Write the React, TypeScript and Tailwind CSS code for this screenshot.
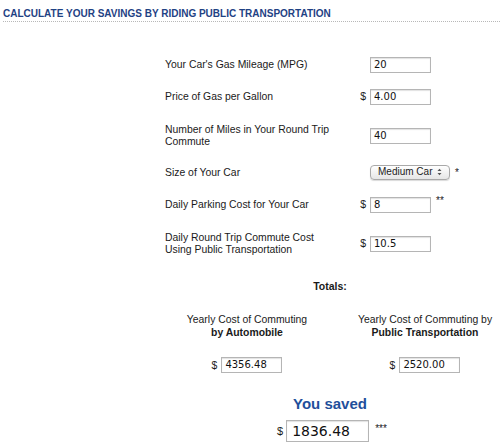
import React from 'react';

const labelFont = { fontFamily: '"Liberation Sans", Arial, sans-serif' };

function Field({ value, className = '' }: { value: string; className?: string }) {
  return (
    <div
      className={`flex items-center border border-[#b5b5b5] bg-white pl-[3px] text-[10px] leading-none text-[#111] shadow-[inset_0_1px_1px_rgba(0,0,0,0.12)] ${className}`}
      style={{ fontFamily: '"DejaVu Sans", Verdana, sans-serif' }}
    >
      {value}
    </div>
  );
}

type Row = {
  label: string[];
  dollar?: boolean;
  value?: string;
  select?: boolean;
  note?: string;
  height: string;
};

const rows: Row[] = [
  { label: ["Your Car's Gas Mileage (MPG)"], value: '20', height: 'h-[32px]' },
  { label: ['Price of Gas per Gallon'], dollar: true, value: '4.00', height: 'h-[32px]' },
  { label: ['Number of Miles in Your Round Trip', 'Commute'], value: '40', height: 'h-[46px]' },
  { label: ['Size of Your Car'], select: true, note: '*', height: 'h-[28px]' },
  { label: ['Daily Parking Cost for Your Car'], dollar: true, value: '8', note: '**', height: 'h-[36px]' },
  {
    label: ['Daily Round Trip Commute Cost', 'Using Public Transportation'],
    dollar: true,
    value: '10.5',
    height: 'h-[42px]',
  },
];

export default function App() {
  return (
    <div className="h-[444px] w-[500px] bg-white text-[#1a1a1a]" style={labelFont}>
      <div className="pl-[3px] pt-[7px]">
        <h1 className="text-[10px] font-bold leading-[13px] text-[#1f4284]">
          CALCULATE YOUR SAVINGS BY RIDING PUBLIC TRANSPORTATION
        </h1>
        <div className="mt-[1px] border-b border-dotted border-[#b8b8b8]" />
      </div>

      <div className="mt-[27px]">
        {rows.map((row) => (
          <div key={row.label[0]} className={`flex items-center pl-[165px] ${row.height}`}>
            <div className="w-[191px] text-[10.4px] leading-[12px]">
              {row.label.map((l) => (
                <div key={l}>{l}</div>
              ))}
            </div>
            <div className="w-[14px] pr-[4px] text-right text-[10.5px]">{row.dollar ? '$' : ''}</div>
            {row.select ? (
              <div className="-mt-[2px] flex h-[15px] w-[80px] items-center justify-between rounded-[4px] border border-[#a9a9a9] bg-gradient-to-b from-white to-[#e6e6e6] pl-[7px] pr-[7px] text-[10px] leading-none text-[#222] shadow-[0_1px_1px_rgba(0,0,0,0.15)]">
                <span>Medium Car</span>
                <svg width="5" height="8" viewBox="0 0 5 8">
                  <path d="M0.5 3 L2.5 0.8 L4.5 3 Z M0.5 5 L2.5 7.2 L4.5 5 Z" fill="#555" />
                </svg>
              </div>
            ) : (
              <Field value={row.value ?? ''} className="h-[16px] w-[61px]" />
            )}
            {row.note ? (
              <span className="ml-[5px] self-start pt-[9px] text-[10px] leading-none">{row.note}</span>
            ) : null}
          </div>
        ))}
      </div>

      <div className="mt-[15px] pl-[160px] text-center text-[10.5px] font-bold leading-[13px]">Totals:</div>

      <div className="mt-[20px] flex text-[10.4px] leading-[13px]">
        <div className="ml-[177px] flex w-[140px] flex-col items-center">
          <div className="text-center">Yearly Cost of Commuting</div>
          <div className="text-center font-bold">by Automobile</div>
          <div className="mt-[18px] flex items-center">
            <span className="mr-[4px]">$</span>
            <Field value="4356.48" className="h-[16px] w-[61px]" />
          </div>
        </div>
        <div className="ml-[38px] flex w-[140px] flex-col items-center">
          <div className="whitespace-nowrap text-center">Yearly Cost of Commuting by</div>
          <div className="text-center font-bold">Public Transportation</div>
          <div className="mt-[18px] flex items-center">
            <span className="mr-[4px]">$</span>
            <Field value="2520.00" className="h-[16px] w-[61px]" />
          </div>
        </div>
      </div>

      <div className="mt-[22px] pl-[160px] text-center text-[15px] font-bold leading-[17px] text-[#1f4f9b]">
        You saved
      </div>

      <div className="mt-[8px] flex items-center pl-[277px]">
        <span className="mr-[3px] text-[11px]">$</span>
        <div
          className="flex h-[22px] w-[83px] items-center border border-[#b5b5b5] bg-white pl-[5px] text-[14px] leading-none text-[#111] shadow-[inset_0_1px_1px_rgba(0,0,0,0.12)]"
          style={{ fontFamily: '"DejaVu Sans", Verdana, sans-serif' }}
        >
          1836.48
        </div>
        <span className="mb-[4px] ml-[6px] text-[10px] leading-none">***</span>
      </div>
    </div>
  );
}
